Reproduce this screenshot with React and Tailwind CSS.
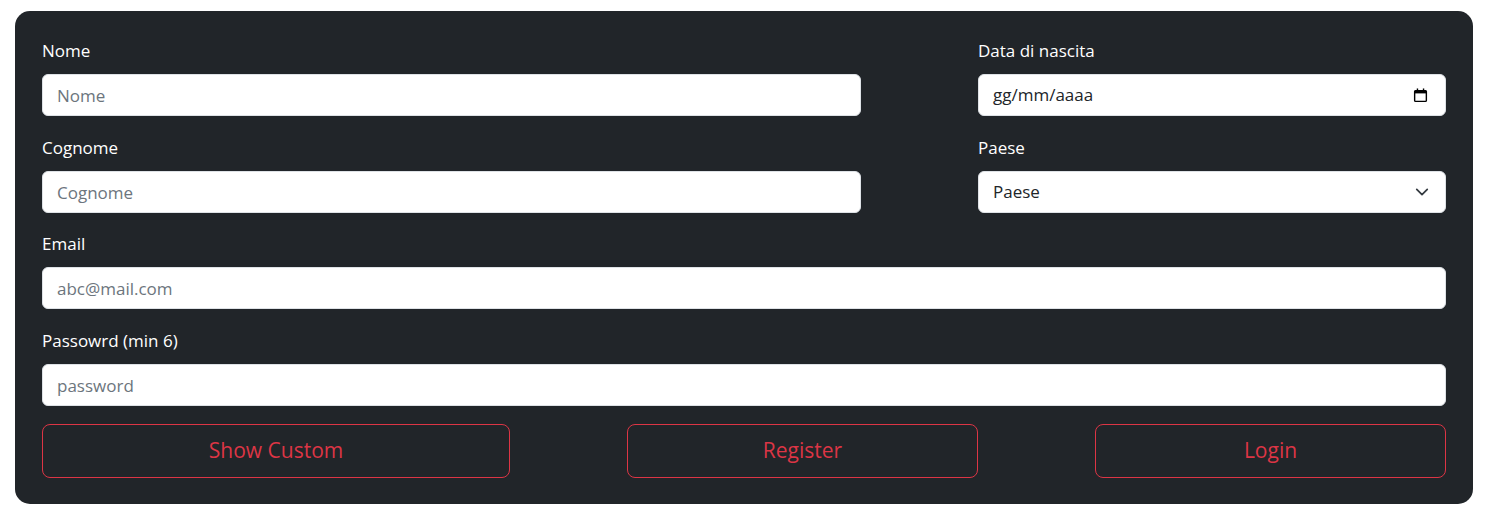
export default function App() {
  const inputClass =
    "w-full h-[42px] px-[14px] rounded-[6px] border border-[#dee2e6] bg-white text-[17px] text-[#212529] placeholder:text-[#6c757d] outline-none";

  const Field = ({ label, children }) => (
    <div className="flex flex-col">
      <label className="text-[17px] leading-[24px] text-white mb-[11px]">{label}</label>
      {children}
    </div>
  );

  return (
    <div
      className="w-[1497px] h-[520px] bg-white pt-[11px] pl-[15px]"
      style={{ fontFamily: '"Open Sans", "Noto Sans", sans-serif' }}
    >
      <div className="w-[1458px] h-[493px] rounded-[15px] bg-[#212529] px-[27px] pt-[28px] flex flex-col">
        <div className="flex justify-between">
          <div className="w-[819px] flex flex-col gap-[20px]">
            <Field label="Nome">
              <input className={inputClass} placeholder="Nome" />
            </Field>
            <Field label="Cognome">
              <input className={inputClass} placeholder="Cognome" />
            </Field>
          </div>
          <div className="w-[468px] flex flex-col gap-[20px]">
            <Field label="Data di nascita">
              <div className={inputClass + " flex items-center justify-between"}>
                <span>gg/mm/aaaa</span>
                <svg width="15" height="15" viewBox="0 0 16 16" className="mr-[3px]">
                  <rect x="1.75" y="2.75" width="12.5" height="11.5" rx="1" fill="none" stroke="#000" strokeWidth="1.5" />
                  <rect x="1.75" y="2.75" width="12.5" height="3" fill="#000" />
                  <rect x="4" y="0.5" width="1.5" height="3" fill="#000" />
                  <rect x="10.5" y="0.5" width="1.5" height="3" fill="#000" />
                </svg>
              </div>
            </Field>
            <Field label="Paese">
              <div className={inputClass + " flex items-center justify-between"}>
                <span>Paese</span>
                <svg width="14" height="14" viewBox="0 0 16 16" className="mr-[2px]">
                  <path d="M2 5l6 6 6-6" fill="none" stroke="#343a40" strokeWidth="2" strokeLinecap="round" strokeLinejoin="round" />
                </svg>
              </div>
            </Field>
          </div>
        </div>

        <div className="flex flex-col gap-[20px] mt-[19px]">
          <Field label="Email">
            <input className={inputClass} placeholder="abc@mail.com" />
          </Field>
          <Field label="Passowrd (min 6)">
            <input type="password" className={inputClass} placeholder="password" />
          </Field>
        </div>

        <div className="flex justify-between mt-[18px]">
          <button className="w-[468px] h-[54px] rounded-[8px] border border-[#dc3545] text-[#dc3545] text-[21px]">
            Show Custom
          </button>
          <button className="w-[351px] h-[54px] rounded-[8px] border border-[#dc3545] text-[#dc3545] text-[21px]">
            Register
          </button>
          <button className="w-[351px] h-[54px] rounded-[8px] border border-[#dc3545] text-[#dc3545] text-[21px]">
            Login
          </button>
        </div>
      </div>
    </div>
  );
}
